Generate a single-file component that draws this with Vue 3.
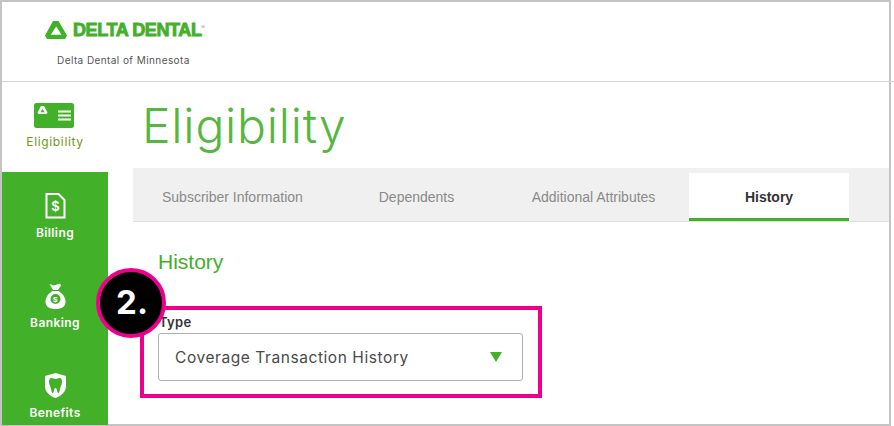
<script setup>
const tabs = [
  { label: 'Subscriber Information', width: 202 },
  { label: 'Dependents', width: 163 },
  { label: 'Additional Attributes', width: 191 },
  { label: 'History', width: 160, active: true }
]
</script>

<template>
  <div class="page">
    <div class="frame">
      <header class="top">
        <div class="brand">
          <div class="logo">
            <svg width="22" height="18" viewBox="0 0 22 18">
              <path fill="#43b02a" fill-rule="evenodd" d="M8 0h5.500l8.500 14.500-2 3.500H2l-2-3.500zM11.200 5.500L5.800 13.800H16.500z" />
            </svg>
            <span class="logo-text">DELTA DENTAL</span>
            <span class="reg">®</span>
          </div>
          <div class="org">Delta Dental of Minnesota</div>
        </div>
      </header>

      <div class="body">
        <nav class="side">
          <div class="item current">
            <svg width="40" height="25" viewBox="0 0 40 25">
              <rect width="40" height="25" rx="2.500" fill="#43b02a" />
              <path fill="#fff" fill-rule="evenodd" d="M7 3h3l3.500 6.500-1 1.500h-8l-1-1.500zM8.500 6l-2 3.200h4z" />
              <path fill="#fff" d="M24 7.500h13v2H24zM24 11.500h13v2H24zM24 15.500h13v2H24z" />
            </svg>
            <span>Eligibility</span>
          </div>
          <div class="green">
            <div class="item">
              <svg width="21" height="26" viewBox="0 0 21 26">
                <path fill="none" stroke="#fff" stroke-width="2" d="M1.500 1h12l6 6v17.500h-18z" />
                <text x="10.500" y="18" text-anchor="middle" class="dollar">$</text>
              </svg>
              <span>Billing</span>
            </div>
            <div class="item">
              <svg width="21" height="26" viewBox="0 0 21 26">
                <path fill="#fff" d="M4.500 1l4.500 1.500 6-2 1 2-3 4.500h-5z" />
                <path fill="#fff" d="M7.500 8h6c4 2.500 7 6 7 11 0 4.500-4 7-10 7s-10-2.500-10-7c0-5 3-8.500 7-11z" />
                <circle cx="10.500" cy="16" r="5" fill="#43b02a" />
                <text x="10.500" y="19" text-anchor="middle" class="coin">$</text>
              </svg>
              <span>Banking</span>
            </div>
            <div class="item">
              <svg width="21" height="26" viewBox="0 0 21 26">
                <path fill="#fff" fill-rule="evenodd" d="M10.500 0l10.500 3v10c0 6-5 10-10.500 12C5 23 0 19 0 13V3zM6.500 5C4.500 5 4 7 4 9c0 3 1.500 4 2 7 .3 2 .8 4 1.800 4 1.200 0 1-5 2.700-5s1.500 5 2.700 5c1 0 1.500-2 1.800-4 .5-3 2-4 2-7 0-2-.5-4-2.500-4-1.500 0-2.500 1-4 1s-2.500-1-4-1z" />
              </svg>
              <span>Benefits</span>
            </div>
          </div>
        </nav>

        <main class="content">
          <h1>Eligibility</h1>
          <div class="tabs">
            <div
              v-for="t in tabs"
              :key="t.label"
              class="tab"
              :class="{ active: t.active }"
              :style="{ width: t.width + 'px' }"
            >{{ t.label }}</div>
          </div>
          <section class="panel">
            <h2>History</h2>
            <label class="type-label">Type</label>
            <div class="select">
              <span>Coverage Transaction History</span>
              <i class="arrow"></i>
            </div>
          </section>
        </main>
      </div>

      <div class="callout"></div>
      <div class="badge">2.</div>
    </div>
  </div>
</template>

<style>
html, body {
  margin: 0;
  background: #fff;
}
</style>

<style scoped>
.page {
  width: 894px;
  height: 426px;
  overflow: hidden;
}

.frame {
  position: relative;
  width: 891px;
  height: 426px;
  box-sizing: border-box;
  border: 2px solid #c4c4c4;
  background: #fff;
  font-family: Inter, "Liberation Sans", sans-serif;
}

.top {
  height: 79px;
  margin-right: -5px;
  border-bottom: 1px solid #d4d4d4;
}

.brand {
  width: 188px;
  padding-left: 43px;
}

.logo {
  display: flex;
  align-items: center;
  height: 22px;
  padding-top: 17px;
}

.logo-text {
  margin-left: 6px;
  font-family: "Liberation Sans", sans-serif;
  font-weight: 700;
  font-size: 18px;
  letter-spacing: -0.4px;
  color: #43b02a;
  -webkit-text-stroke: 0.9px #43b02a;
}

.reg {
  font-size: 5px;
  color: #8a8a8a;
  align-self: flex-start;
  margin-top: 5px;
}

.org {
  margin: 13px 0 0 12px;
  font-size: 10px;
  letter-spacing: 0.42px;
  color: #555;
}

.body {
  display: flex;
  height: 343px;
}

.side {
  width: 106px;
  flex: none;
}

.item {
  display: flex;
  flex-direction: column;
  align-items: center;
  gap: 7px;
  height: 90px;
  font-size: 12px;
  line-height: 14px;
  font-weight: 600;
  letter-spacing: 0.4px;
  color: #fff;
}

.current {
  padding-top: 21px;
  box-sizing: border-box;
  color: #6f9a1a;
}

.current svg {
  margin-right: 2px;
}

.current span {
  font-weight: 400;
  letter-spacing: 0.65px;
}

.green {
  background: #43b02a;
  height: 253px;
  padding-top: 21px;
  box-sizing: border-box;
  overflow: hidden;
}

.dollar {
  font: 700 14px "Liberation Sans", sans-serif;
  fill: #fff;
}

.coin {
  font: 700 8px "Liberation Sans", sans-serif;
  fill: #fff;
}

.content {
  flex: 1;
  min-width: 0;
}

h1 {
  margin: 13px 0 0 34px;
  font-size: 48px;
  line-height: 62px;
  font-weight: 300;
  letter-spacing: 0.8px;
  color: #56b73f;
}

.tabs {
  display: flex;
  height: 48px;
  margin: 11px 0 0 25px;
  padding-top: 5px;
  background: #f0f0f0;
  border-bottom: 1px solid #e0e0e0;
}

.tab {
  box-sizing: border-box;
  text-align: center;
  padding-top: 16px;
  font: 14px "Liberation Sans", sans-serif;
  color: #8a8a8a;
  white-space: nowrap;
}

.tab:first-child {
  text-align: left;
  padding-left: 29px;
}

.tab.active {
  background: #fff;
  color: #333;
  font-weight: 700;
  border-bottom: 3px solid #43b02a;
}

.panel {
  padding: 28px 0 0 50px;
}

h2 {
  margin: 0;
  font: 400 21px/24px "Liberation Sans", sans-serif;
  color: #43b02a;
}

.type-label {
  display: block;
  margin-top: 40px;
  padding-left: 1px;
  font-size: 13px;
  line-height: 16px;
  font-weight: 600;
  letter-spacing: 0.3px;
  color: #333;
}

.select {
  display: flex;
  align-items: center;
  justify-content: space-between;
  box-sizing: border-box;
  width: 365px;
  height: 48px;
  margin-top: 3px;
  padding: 0 20px 0 16px;
  border: 1px solid #b0b0b0;
  border-radius: 3px;
  font-size: 15.500px;
  letter-spacing: 0.57px;
  color: #4a4a4a;
}

.arrow {
  width: 0;
  height: 0;
  border-left: 6px solid transparent;
  border-right: 6px solid transparent;
  border-top: 10px solid #43b02a;
}

.callout {
  position: absolute;
  left: 138px;
  top: 304px;
  width: 402px;
  height: 92px;
  box-sizing: border-box;
  border: 4px solid #ec008c;
}

.badge {
  position: absolute;
  left: 94px;
  top: 266px;
  width: 70px;
  height: 70px;
  box-sizing: border-box;
  padding-left: 2px;
  border: 4px solid #ec008c;
  border-radius: 50%;
  background: #000;
  color: #fff;
  font: 700 33px/60px Inter, "Liberation Sans", sans-serif;
  text-align: center;
}
</style>
